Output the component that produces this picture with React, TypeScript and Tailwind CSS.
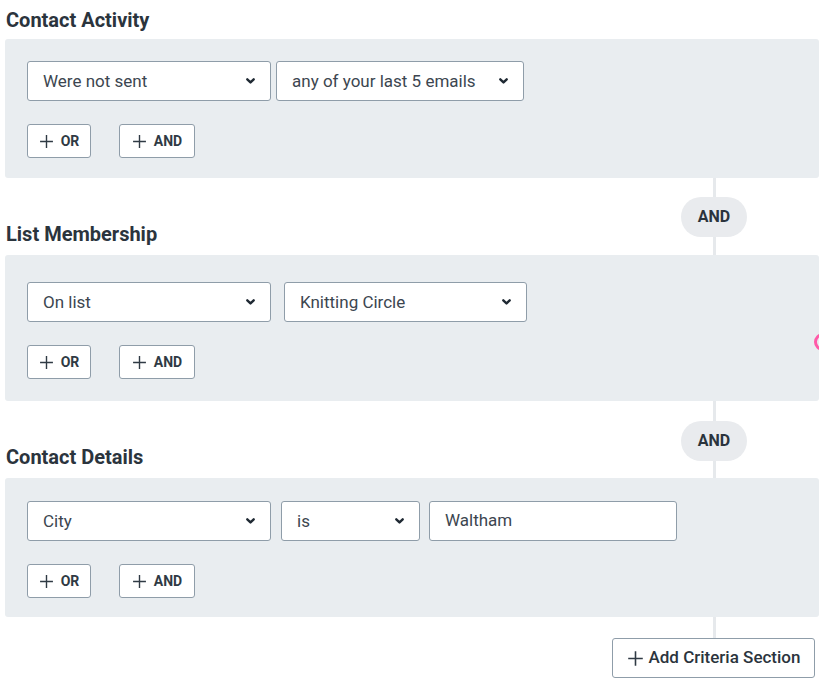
import type { ReactNode } from 'react'

const font = { fontFamily: 'Roboto, "Liberation Sans", sans-serif' }

function Chevron() {
  return (
    <svg width="9" height="6" viewBox="0 0 9 6" className="shrink-0">
      <path d="M1.3 1.3 L4.5 4.4 L7.7 1.3" fill="none" stroke="#1f2933" strokeWidth="2.4" strokeLinecap="round" strokeLinejoin="round" />
    </svg>
  )
}

function Plus({ size = 15 }: { size?: number }) {
  return (
    <svg width={size} height={size} viewBox="0 0 14 14" className="shrink-0">
      <path d="M7 1 V13 M1 7 H13" stroke="#2f3a44" strokeWidth="1.3" />
    </svg>
  )
}

function Select({ label, width, className = '' }: { label: string; width: number; className?: string }) {
  return (
    <div
      className={`flex h-[40px] items-center justify-between rounded-[3px] border border-[#8f9da9] bg-white pl-[15px] pr-[15px] text-[17px] text-[#3c4650] ${className}`}
      style={{ width }}
    >
      <span className="pt-[2px]">{label}</span>
      <Chevron />
    </div>
  )
}

function SmallButton({ label, width, className = '' }: { label: string; width: number; className?: string }) {
  return (
    <div
      className={`flex h-[34px] items-center justify-center gap-[7px] rounded-[3px] border border-[#8f9da9] bg-white text-[14px] font-bold text-[#2f3a44] ${className}`}
      style={{ width }}
    >
      <Plus />
      <span>{label}</span>
    </div>
  )
}

function Panel({ children, height, top }: { children: ReactNode; height: number; top: number }) {
  return (
    <div className="ml-[5px] rounded-[3px] bg-[#e9edf0] pl-[22px]" style={{ height, paddingTop: top }}>
      {children}
      <div className="mt-[23px] flex">
        <SmallButton label="OR" width={64} />
        <SmallButton label="AND" width={76} className="ml-[28px]" />
      </div>
    </div>
  )
}

function Connector({ title, height, pillTop }: { title: string; height: number; pillTop: number }) {
  return (
    <div className="relative flex items-end" style={{ height }}>
      <h2 className="mb-[6px] ml-[6px] text-[20px] font-bold text-[#2b343d]">{title}</h2>
      <div className="absolute left-[713px] top-0 h-full w-[3px] bg-[#e6e9ec]" />
      <div
        className="absolute left-[681px] flex h-[40px] w-[66px] items-center justify-center rounded-full bg-[#e9ebee] text-[16px] font-bold text-[#2b343d]"
        style={{ top: pillTop }}
      >
        AND
      </div>
    </div>
  )
}

export default function App() {
  return (
    <div className="relative h-[680px] w-[819px] overflow-hidden bg-white" style={font}>
      <div className="flex h-[39px] items-center">
        <h2 className="ml-[6px] text-[20px] font-bold text-[#2b343d]">Contact Activity</h2>
      </div>

      <Panel height={139} top={22}>
        <div className="flex">
          <Select label="Were not sent" width={244} />
          <Select label="any of your last 5 emails" width={248} className="ml-[5px]" />
        </div>
      </Panel>

      <Connector title="List Membership" height={77} pillTop={19} />

      <Panel height={146} top={27}>
        <div className="flex">
          <Select label="On list" width={244} />
          <Select label="Knitting Circle" width={243} className="ml-[13px]" />
        </div>
      </Panel>

      <Connector title="Contact Details" height={77} pillTop={20} />

      <Panel height={139} top={23}>
        <div className="flex">
          <Select label="City" width={244} />
          <Select label="is" width={139} className="ml-[10px]" />
          <div className="ml-[9px] flex h-[40px] w-[248px] items-center rounded-[3px] border border-[#8f9da9] bg-white pl-[15px] text-[17px] text-[#3c4650]">
            Waltham
          </div>
        </div>
      </Panel>

      <div className="relative h-[63px]">
        <div className="absolute left-[713px] top-0 h-[21px] w-[3px] bg-[#e6e9ec]" />
        <div className="absolute left-[612px] top-[21px] flex h-[40px] w-[203px] items-center justify-center gap-[5px] rounded-[3px] border border-[#8f9da9] bg-white text-[17px] font-medium text-[#2b343d]">
          <Plus size={17} />
          <span>Add Criteria Section</span>
        </div>
      </div>

      <div className="absolute left-[814px] top-[333px] h-[18px] w-[18px] rounded-full border-[3px] border-[#ff5aa8]" />
    </div>
  )
}
